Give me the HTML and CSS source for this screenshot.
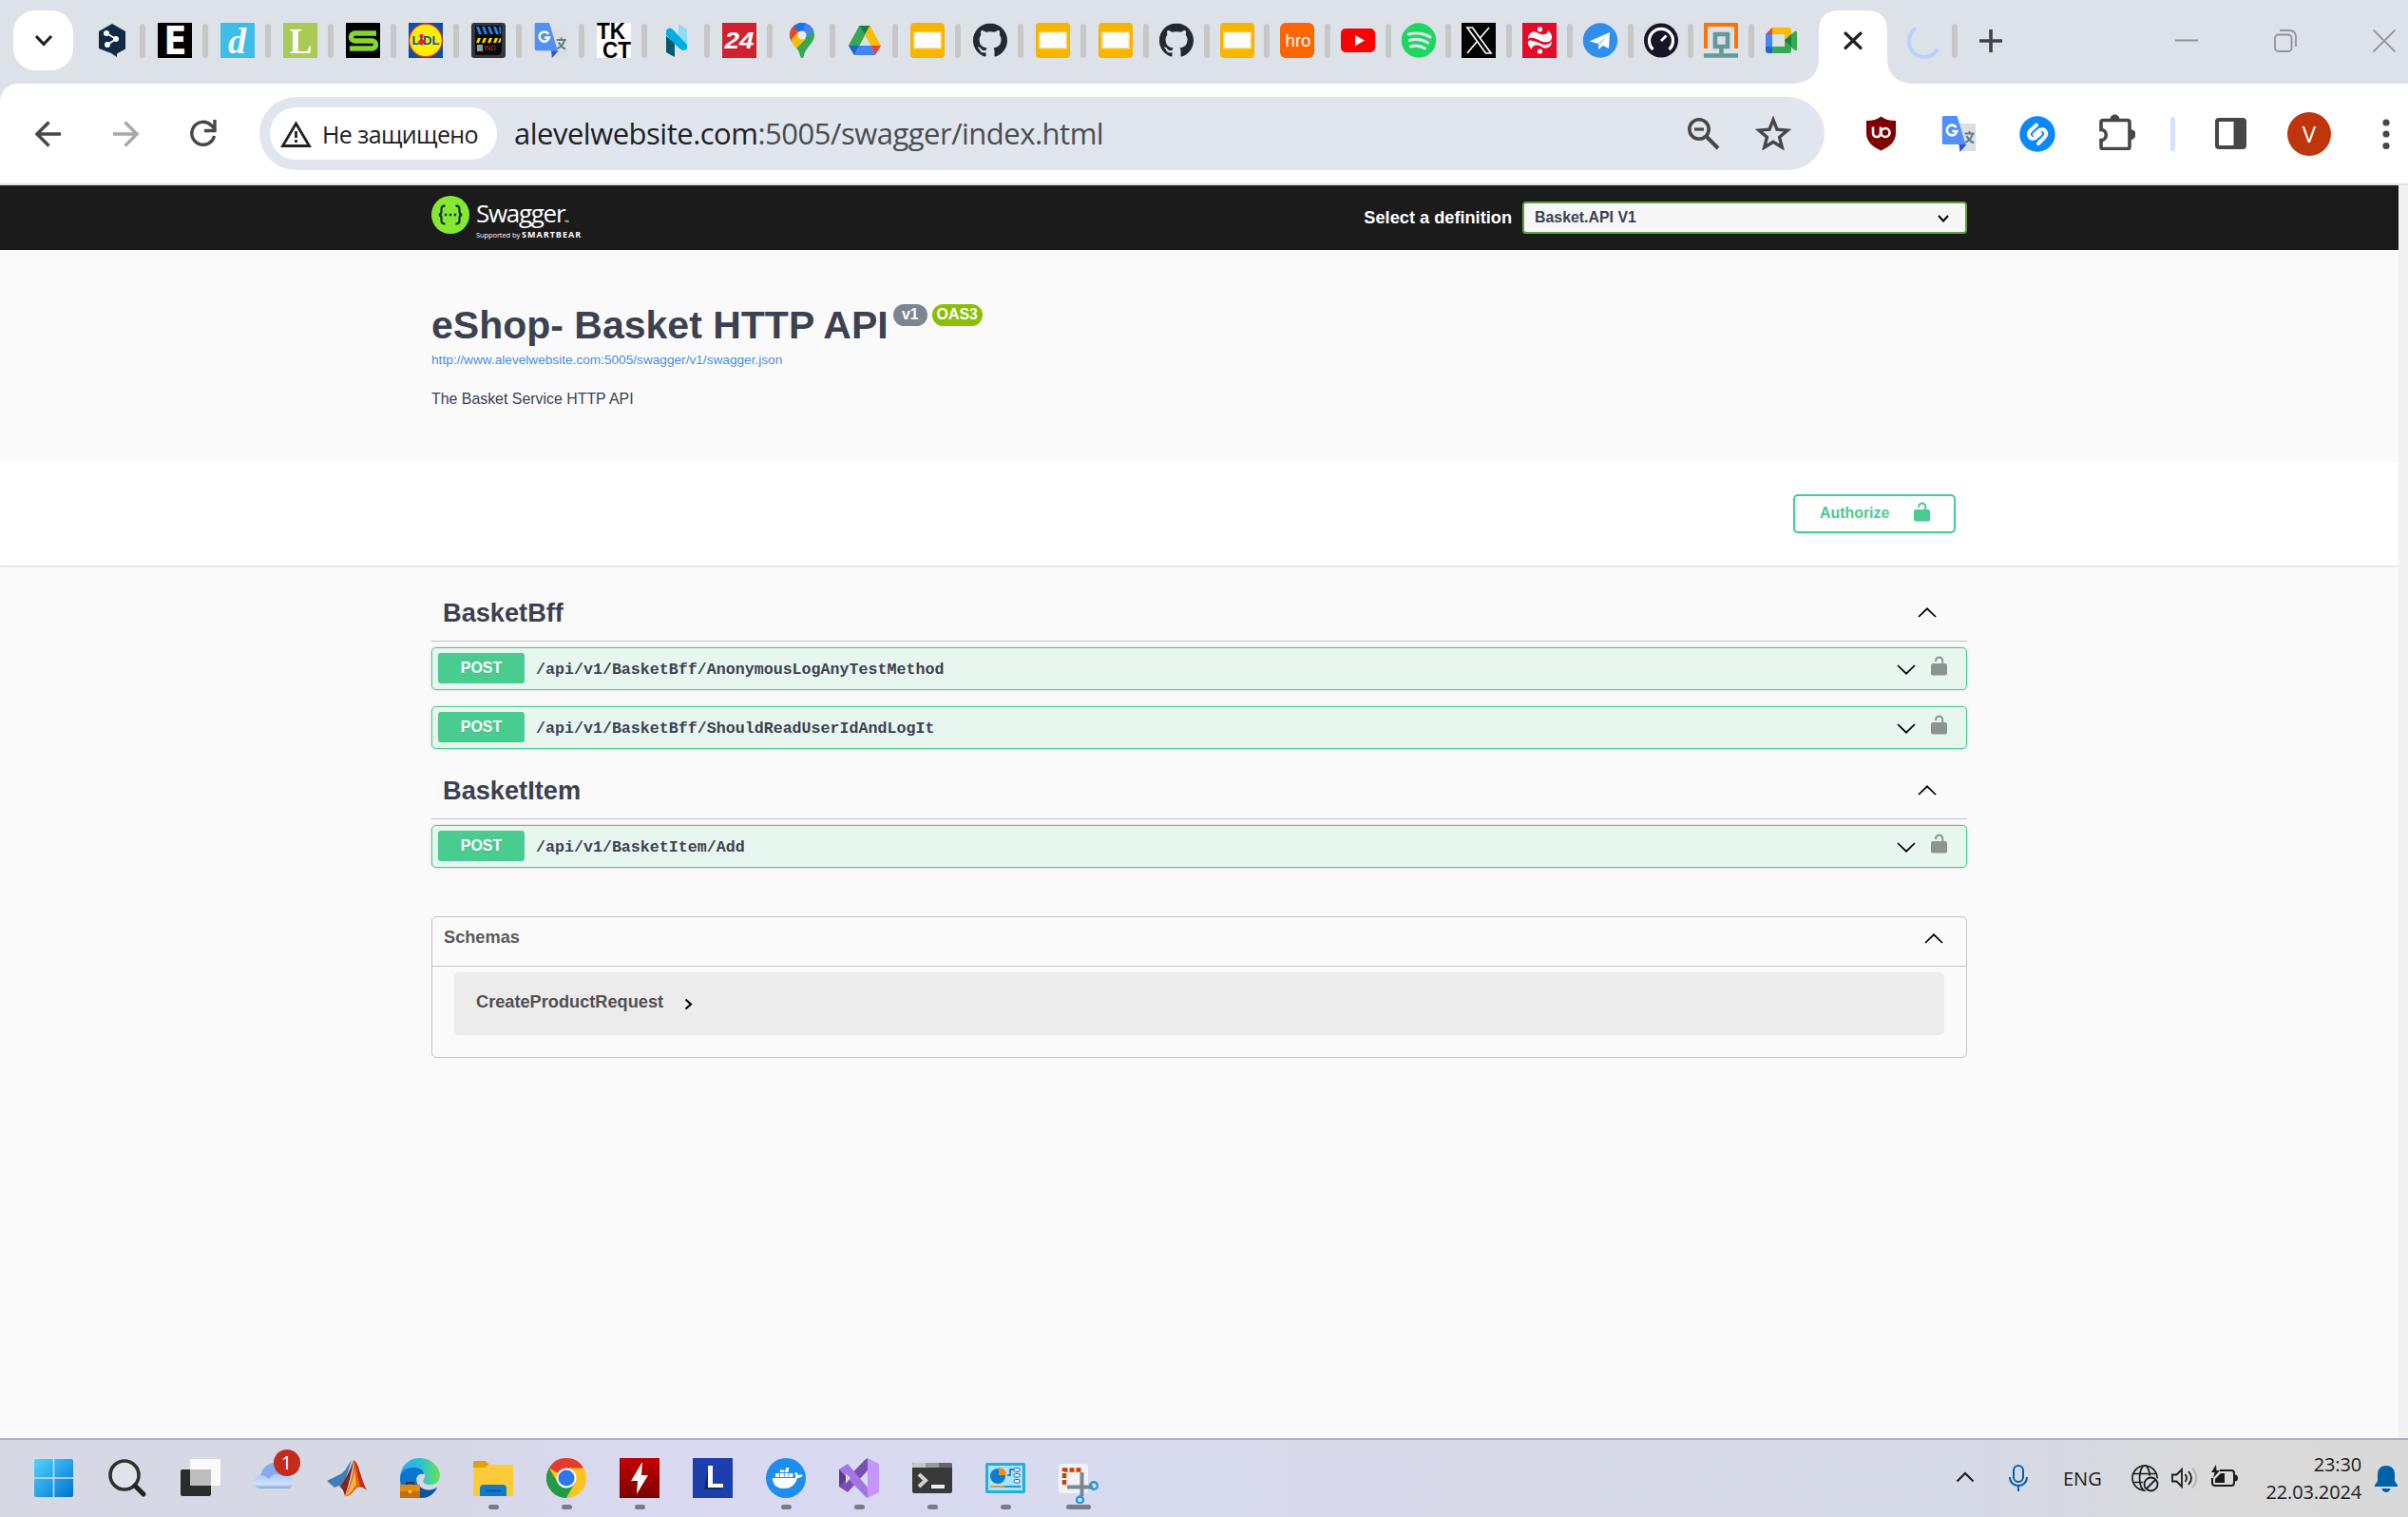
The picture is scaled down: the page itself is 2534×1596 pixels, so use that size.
FILE: index.html
```html
<!DOCTYPE html>
<html lang="ru">
<head>
<meta charset="utf-8">
<title>Swagger UI</title>
<link rel="stylesheet" href="styles.css">
</head>
<body>
<svg class="defs" aria-hidden="true">
  <symbol id="slides" viewBox="0 0 36 37"><rect width="36" height="37" rx="4" fill="#f8b500"/><rect x="3" y="9.500" width="30" height="18" fill="#fbd980"/><rect x="4.500" y="10.500" width="27" height="15.500" fill="#fff"/></symbol>
  <symbol id="github" viewBox="0 0 16 16"><path fill="#24292f" d="M8 0C3.580 0 0 3.580 0 8c0 3.540 2.290 6.530 5.470 7.590.4.070.55-.17.55-.38 0-.19-.01-.82-.01-1.490-2.010.37-2.530-.49-2.690-.94-.09-.23-.48-.94-.82-1.130-.28-.15-.68-.52-.01-.53.63-.01 1.080.58 1.230.82.72 1.210 1.870.87 2.330.66.07-.52.28-.87.51-1.070-1.780-.2-3.640-.89-3.640-3.950 0-.87.31-1.590.82-2.150-.08-.2-.36-1.020.08-2.120 0 0 .67-.21 2.200.82.64-.18 1.320-.27 2-.27s1.360.09 2 .27c1.530-1.040 2.200-.82 2.200-.82.44 1.100.16 1.920.08 2.120.51.56.82 1.270.82 2.150 0 3.070-1.870 3.750-3.650 3.950.29.25.54.73.54 1.480 0 1.070-.01 1.930-.01 2.200 0 .21.15.46.55.38A8.010 8.010 0 0 0 16 8c0-4.420-3.580-8-8-8z"/></symbol>
  <symbol id="translate" viewBox="0 0 36 38"><path d="M17 8h17a2 2 0 0 1 2 2v25a2 2 0 0 1-2 2H20z" fill="#dcdfe2"/><path d="M18 30h8l-7 8z" fill="#3850c8"/><path d="M2 0h14l9 30H2a2 2 0 0 1-2-2V2a2 2 0 0 1 2-2z" fill="#5090f8"/><path d="M24 18.500h10M29 16v2.500M32.500 18.500c-1 4-4 7.500-8 9.500M26 21c2 4 4.500 6 7.500 7.500" fill="none" stroke="#607d8b" stroke-width="2"/><path d="M15 12a5.300 5.300 0 1 0 .8 4h-5" fill="none" stroke="#fff" stroke-width="2.600"/></symbol>
  <symbol id="up" viewBox="0 0 20 11"><path d="M1 10L10 1.300 19 10" fill="none" stroke="#000" stroke-width="1.700"/></symbol>
  <symbol id="down" viewBox="0 0 20 11"><path d="M1 1l9 8.700L19 1" fill="none" stroke="#000" stroke-width="1.700"/></symbol>
  <symbol id="lock" viewBox="0 0 17 21"><path d="M5 6C5 .2 12.300.2 12.300 5.500V9" fill="none" stroke="currentColor" stroke-width="2"/><rect y="8" width="17" height="12.500" rx="2" fill="currentColor"/></symbol>
</svg>

<header class="tabs">
  <button class="tab-search"><svg width="20" height="14" viewBox="0 0 20 14"><path d="M2 2l8 8.500L18 2" fill="none" stroke="#202124" stroke-width="3.200"/></svg></button>
  <div class="tab"><svg viewBox="0 0 36 37"><path d="M18 1l14 8v18.500l-9 5V36l-6-4-13-5V9z" fill="#0f2b46"/><path d="M12 11l10 6-9 6" fill="none" stroke="#fff" stroke-width="1.800"/><circle cx="12" cy="11" r="3" fill="#fff"/><circle cx="22" cy="17" r="3" fill="#fff"/><circle cx="13" cy="23" r="3" fill="#fff"/></svg></div>
  <div class="tab"><svg viewBox="0 0 36 37"><rect width="36" height="37"/><text x="6.500" y="33" font-size="40" textLength="24" lengthAdjust="spacingAndGlyphs" class="fi slab">E</text></svg></div>
  <div class="tab"><svg viewBox="0 0 36 37"><rect width="36" height="37" fill="#3dbeea"/><text x="8" y="32" font-size="38" class="fi serif it">d</text></svg></div>
  <div class="tab"><svg viewBox="0 0 36 37"><rect width="36" height="37" fill="#a9cb56"/><text x="6.500" y="32" font-size="38" textLength="24" lengthAdjust="spacingAndGlyphs" class="fi serif">L</text></svg></div>
  <div class="tab"><svg viewBox="0 0 36 37"><rect width="36" height="37"/><path d="M32 11H9.500a3.500 3.500 0 0 0 0 8h18a3.500 3.500 0 0 1 0 8H4" fill="none" stroke="#83d730" stroke-width="5.500"/></svg></div>
  <div class="tab"><svg viewBox="0 0 36 37"><rect width="36" height="37" fill="#0a4fa8"/><circle cx="18" cy="18.500" r="17.300" fill="#ffee00" stroke="#e3342a" stroke-width="1.200"/><text x="3.500" y="23" font-size="12" textLength="29" lengthAdjust="spacingAndGlyphs" class="fi" fill="#0a4fa8">LiDL</text><circle cx="13.500" cy="14" r="2.200" fill="#e3202a"/><path d="M13.500 16l4 4-4 4-4-4z" fill="#e3202a"/></svg></div>
  <div class="tab"><svg viewBox="0 0 36 37"><rect width="36" height="37" rx="3" fill="#33363b"/><path d="M4 3h28v28l-3 3H4z" fill="#08090b"/><path d="M5 4h3l3 8H8zM11 4h3l3 8h-3zM17 4h3l3 8h-3zM23 4h3l3 8h-3zM29 4h2v8h-1z" fill="#1689f5"/><path d="M7 16h3l-2 5H5zM13 16h3l-2 5h-3zM19 16h3l-2 5h-3zM25 16h3l-2 5h-3zM30 16h1v3l-1 2h-2z" fill="#fdd400"/><path d="M6 23h6v7H6z" fill="#ec8a1c"/><path d="M6 25l3-2 3 3v2H6z" fill="#4ab5f0"/><text x="13" y="29" font-size="7.500" class="fi thin" fill="#b53a30">IND</text></svg></div>
  <div class="tab"><svg viewBox="0 0 36 38"><use href="#translate"/></svg></div>
  <div class="tab"><svg viewBox="0 0 36 37"><rect width="36" height="37" fill="#fff"/><text x="0" y="17" font-size="23" textLength="30" lengthAdjust="spacingAndGlyphs" class="fi" fill="#000">TK</text><text x="6" y="36.500" font-size="23" textLength="30" lengthAdjust="spacingAndGlyphs" class="fi" fill="#000">CT</text></svg></div>
  <div class="tab"><svg viewBox="0 0 36 37"><path d="M20 1l9 6v22l-9-6z" fill="#90dcf2"/><path d="M7 14l9 7v15l-9-5z" fill="#015a70"/><path d="M7 8q4-5 8 0l14 15v4q-4 4-8 0L7 13z" fill="#00aee6"/></svg></div>
  <div class="tab"><svg viewBox="0 0 36 37"><rect width="36" height="37" fill="#d22030"/><text x="2.500" y="27" font-size="23" textLength="31" lengthAdjust="spacingAndGlyphs" class="fi it">24</text></svg></div>
  <div class="tab"><svg viewBox="0 0 36 37"><clipPath id="pin"><path d="M18 0a13 13 0 0 1 13 13c0 9-9.500 12-11.500 23.200-.3 1.100-2.700 1.100-3 0C14.500 25 5 22 5 13A13 13 0 0 1 18 0z"/></clipPath><g clip-path="url(#pin)"><path d="M0 0h36v37H0z" fill="#34a853"/><path d="M8 0h22l-9 10-9 3z" fill="#1a73e8"/><path d="M22 0l9 7-7 7-5-7z" fill="#4285f4"/><path d="M0 0l9 4 7 7L5 21z" fill="#ea4335"/><path d="M5 20l9-11 8 8L9 30z" fill="#fbbc04"/></g><circle cx="18" cy="13" r="4.600" fill="#e8ebf0"/></svg></div>
  <div class="tab"><svg viewBox="0 0 36 37"><path d="M12.500 3h11L7 34 1 24z" fill="#34a853"/><path d="M12.500 3h11L18 12.500z" fill="#188038"/><path d="M12.500 3L18 12.500 12 24H1z" fill="#34a853"/><path d="M23.500 3L18 12.500 24.500 24H35z" fill="#fbbc04"/><path d="M1 24h11l-5 10z" fill="#1967d2"/><path d="M12 24h12.500L29 34H7z" fill="#4285f4"/><path d="M24.500 24H35l-6 10z" fill="#ea4335"/></svg></div>
  <div class="tab"><svg viewBox="0 0 36 37"><use href="#slides"/></svg></div>
  <div class="tab"><svg viewBox="0 0 16 16"><use href="#github"/></svg></div>
  <div class="tab"><svg viewBox="0 0 36 37"><use href="#slides"/></svg></div>
  <div class="tab"><svg viewBox="0 0 36 37"><use href="#slides"/></svg></div>
  <div class="tab slim"><svg viewBox="0 0 16 16"><use href="#github"/></svg></div>
  <div class="tab slim"><svg viewBox="0 0 36 37"><use href="#slides"/></svg></div>
  <div class="tab slim"><svg viewBox="0 0 36 37"><rect width="36" height="37" rx="6" fill="#ff6500"/><text x="5.500" y="25" font-size="18" textLength="27" lengthAdjust="spacingAndGlyphs" class="fi thin">hro</text></svg></div>
  <div class="tab slim"><svg viewBox="0 0 36 37"><rect y="6" width="36" height="25" rx="5" fill="#f00"/><path d="M15 13l10 5.500-10 6z" fill="#fff"/></svg></div>
  <div class="tab slim"><svg viewBox="0 0 36 37"><circle cx="18" cy="18.500" r="18.200" fill="#1ed760"/><path d="M7.500 12q12-3 22.500 3M8.500 18.500q10-3 19 2.500M9.500 25q8-2.500 15 2" fill="none" stroke="#dfe5ea" stroke-width="3.200" stroke-linecap="round"/></svg></div>
  <div class="tab slim"><svg viewBox="0 0 36 37"><rect width="36" height="37"/><path d="M6 5h5.500L31 32h-5.500z" fill="none" stroke="#fff" stroke-width="1.700"/><path d="M29 5L19.500 16M16 20L6 32" stroke="#fff" stroke-width="1.700"/></svg></div>
  <div class="tab slim"><svg viewBox="0 0 36 37"><rect width="36" height="37" fill="#e60a28"/><circle cx="18.500" cy="6.800" r="2.600" fill="#fff"/><circle cx="18.500" cy="30" r="2.600" fill="#fff"/><path d="M6 17C6 9 13 8 17 11c5 3 10 1 10-3 6 5 5 11 0 12-6 1.500-10-3-15-4-3-.5-5 0-6 1z" fill="#fff"/><path d="M31 19c0 8-7 9-11 6-5-3-10-1-10 3-6-5-5-11 0-9 6 0 10 5 15 4 3-.5 5-2 6-4z" fill="#fff"/></svg></div>
  <div class="tab slim"><svg viewBox="0 0 36 37"><circle cx="18" cy="18.500" r="18.200" fill="#2f8fef"/><path d="M6.500 19.500L28 10l-1 17-6-3-5 4v-6z" fill="#fff"/><path d="M16 21l9-7-6 8-2.500 4z" fill="#bcdcfa"/></svg></div>
  <div class="tab slim"><svg viewBox="0 0 36 37"><circle cx="18" cy="18.500" r="18" fill="#141526"/><path d="M9.500 28a12.500 12.500 0 1 1 17 0" fill="none" stroke="#fff" stroke-width="3.200"/><path d="M18 19l5.500-5.500" stroke="#fff" stroke-width="2.800"/></svg></div>
  <div class="tab slim"><svg viewBox="0 0 36 37"><path d="M2 27V2h32v25" fill="none" stroke="#ff7400" stroke-width="4"/><path d="M12 12h13v13H12zM18.500 26v8M0 34.500h36" fill="none" stroke="#62999b" stroke-width="4.600"/></svg></div>
  <div class="tab slim last"><svg viewBox="0 0 36 37"><path d="M1 12l7-7v7z" fill="#ea4335"/><path d="M8 5h17q3 0 3 3v9l-7 3v-8H8z" fill="#fbbc04"/><path d="M1 12h7v13H1z" fill="#4285f4"/><path d="M1 25h7v7H4q-3 0-3-3z" fill="#1967d2"/><path d="M8 25h13v-7l7-6v17q0 3-3 3H8z" fill="#34a853"/><path d="M21 18.500l10-9q3-2 3 1v17q0 3-3 1z" fill="#34a853"/><path d="M21 18.500l7-6.500v13z" fill="#188038"/></svg></div>
  <div class="active-tab"><svg width="126" height="77" viewBox="0 0 126 77"><path d="M0 77c17-1 27-10 27-27V22Q27 0 49 0h28q22 0 22 22v28c0 17 10 26 27 27z" fill="#fff"/><path d="M55 24l16 15.500M71 24L55 39.500" stroke="#202124" stroke-width="3.200" stroke-linecap="round"/></svg></div>
  <div class="loading-tab"><svg width="36" height="36" viewBox="0 0 36 36"><path d="M9.500 5A16 16.500 0 1 0 33 27" fill="none" stroke="#bad2fa" stroke-width="4.200" stroke-linecap="round"/></svg></div>
  <svg class="plus" width="24" height="24" viewBox="0 0 24 24"><path d="M12 0v24M0 12h24" stroke="#404246" stroke-width="3.600"/></svg>
  <div class="win">
    <svg width="24" height="24" viewBox="0 0 24 24"><path d="M0 11.500h24" stroke="#909398" stroke-width="2"/></svg>
    <svg width="24" height="24" viewBox="0 0 24 24"><rect x="1" y="5.500" width="17.500" height="17.500" rx="3.500" fill="none" stroke="#909398" stroke-width="1.800"/><path d="M6 1h10q7 0 7 7v10" fill="none" stroke="#909398" stroke-width="1.800"/></svg>
    <svg width="24" height="24" viewBox="0 0 24 24"><path d="M.5.5l23 23m0-23l-23 23" stroke="#909398" stroke-width="1.800"/></svg>
  </div>
</header>

<nav class="toolbar">
  <svg class="back" width="28" height="28" viewBox="0 0 28 28"><path d="M27 14H2M14.500 1.500L2 14l12.500 12.500" fill="none" stroke="#474747" stroke-width="3.400"/></svg>
  <svg class="fwd" width="28" height="28" viewBox="0 0 28 28"><path d="M1 14h25M13.500 1.500L26 14 13.500 26.500" fill="none" stroke="#a9a9a9" stroke-width="3.400"/></svg>
  <svg class="reload" width="29" height="29" viewBox="0 0 29 29"><path d="M26.500 17A12 12 0 1 1 23 5.500L26.500 9" fill="none" stroke="#474747" stroke-width="3.400"/><path d="M27 0v11.500H16" fill="none" stroke="#474747" stroke-width="3.400"/></svg>
  <div class="omnibox">
    <div class="chip"><svg width="33" height="28" viewBox="0 0 33 28"><path d="M16.500 3L30.500 26.500H2.500z" fill="none" stroke="#202124" stroke-width="2.800"/><path d="M16.500 11v7M16.500 20v3" stroke="#202124" stroke-width="2.800"/></svg><span>Не защищено</span></div>
    <div class="url">alevelwebsite.com<span>:5005/swagger/index.html</span></div>
    <svg class="mag" width="34" height="34" viewBox="0 0 34 34"><circle cx="12" cy="12" r="10.200" fill="none" stroke="#474747" stroke-width="3.600"/><path d="M19 19l13 13" stroke="#474747" stroke-width="4"/><path d="M7 12h10" stroke="#474747" stroke-width="3.200"/></svg>
    <svg class="star" width="38" height="36" viewBox="0 0 38 36"><path d="M19 4l4 10.200 11 .9-8.400 7.200 2.700 10.700L19 27.200 9.700 33l2.700-10.700L4 15.100l11-.9z" fill="none" stroke="#474747" stroke-width="3.400"/></svg>
  </div>
  <div class="exts">
    <svg width="33" height="37" viewBox="0 0 33 37"><path d="M16.500.5Q22 5 32 5v13c0 10-8 15-15.500 18.500C9 33 1 28 1 18V5Q11 5 16.500.5z" fill="#800000"/><path d="M8 11.500v6q0 4.500 4 4.500t4-4.500v-6" fill="none" stroke="#fff" stroke-width="2.600"/><circle cx="21" cy="17.500" r="4.500" fill="none" stroke="#fff" stroke-width="2.600"/></svg>
    <svg width="37" height="38" viewBox="0 0 36 38"><use href="#translate"/></svg>
    <svg width="38" height="38" viewBox="0 0 38 38"><circle cx="19" cy="19" r="18.700" fill="#0a88fe"/><path d="M18 9.500l-6 5.500c-5 5 0 11 5 8l5-4.500" fill="none" stroke="#fff" stroke-width="4" stroke-linecap="round"/><path d="M20 29l6-6c5-5 0-11-5-8l-5 4.500" fill="none" stroke="#fff" stroke-width="4" stroke-linecap="round"/></svg>
    <svg width="38" height="38" viewBox="0 0 38 38"><path d="M4 6.500h26q2 0 2 2v26q0 2-2 2H4q-2 0-2-2v-7c7 0 7-11 0-11v-8q0-2 2-2z" fill="none" stroke="#474747" stroke-width="3.600"/><path d="M11.500 5.500a5 5 0 0 1 10 0zM33 16a5 5 0 0 1 0 11z" fill="#474747"/></svg>
    <i class="bar"></i>
    <svg width="33" height="33" viewBox="0 0 33 33"><rect width="33" height="33" rx="4" fill="#474747"/><rect x="4" y="4" width="15.500" height="25" fill="#fff"/></svg>
    <span class="avatar">V</span>
    <svg width="8" height="34" viewBox="0 0 8 34"><g fill="#474747"><circle cx="4" cy="5" r="3.600"/><circle cx="4" cy="17" r="3.600"/><circle cx="4" cy="29.500" r="3.600"/></g></svg>
  </div>
</nav>

<main class="viewport">
  <div class="page">
    <div class="topbar"><div class="wrap">
      <svg class="logo" width="40" height="40" viewBox="0 0 40 40"><circle cx="20" cy="20" r="20" fill="#85ea2d"/><path d="M14.500 10.500q-4 0-4 3.500v2.500q0 3-2.700 3.500 2.700.5 2.700 3.500V26q0 3.500 4 3.500M25.500 10.500q4 0 4 3.500v2.500q0 3 2.700 3.500-2.700.5-2.700 3.500V26q0 3.500-4 3.500" fill="none" stroke="#173647" stroke-width="2.300"/><g fill="#173647"><circle cx="15" cy="20" r="1.400"/><circle cx="20" cy="20" r="1.400"/><circle cx="25" cy="20" r="1.400"/></g></svg>
      <div class="brand"><div class="name"><span>Swagger</span><small>™</small></div><div class="sup"><span>Supported by</span> <b>SMARTBEAR</b></div></div>
      <label>Select a definition</label>
      <div class="select"><span>Basket.API V1</span><svg width="12" height="8" viewBox="0 0 12 8"><path d="M1 1l5 5.500L11 1" fill="none" stroke="#000" stroke-width="2"/></svg></div>
    </div></div>
    <section class="info wrap">
      <div class="title"><h1>eShop- Basket HTTP API</h1><span class="ver">v1</span><span class="ver oas">OAS3</span></div>
      <a>http://www.alevelwebsite.com:5005/swagger/v1/swagger.json</a>
      <p>The Basket Service HTTP API</p>
    </section>
    <section class="scheme"><div class="wrap"><button class="auth"><span>Authorize</span><svg width="17" height="21"><use href="#lock"/></svg></button></div></section>
    <section class="ops wrap">
      <div class="tag"><h3>BasketBff</h3><svg width="20" height="11"><use href="#up"/></svg></div>
      <div class="op"><b>POST</b><code>/api/v1/BasketBff/AnonymousLogAnyTestMethod</code><svg width="20" height="11"><use href="#down"/></svg><svg class="lock" width="17" height="21"><use href="#lock"/></svg></div>
      <div class="op"><b>POST</b><code>/api/v1/BasketBff/ShouldReadUserIdAndLogIt</code><svg width="20" height="11"><use href="#down"/></svg><svg class="lock" width="17" height="21"><use href="#lock"/></svg></div>
      <div class="tag second"><h3>BasketItem</h3><svg width="20" height="11"><use href="#up"/></svg></div>
      <div class="op"><b>POST</b><code>/api/v1/BasketItem/Add</code><svg width="20" height="11"><use href="#down"/></svg><svg class="lock" width="17" height="21"><use href="#lock"/></svg></div>
    </section>
    <section class="schemas wrap">
      <div class="shead"><h4>Schemas</h4><svg width="20" height="11"><use href="#up"/></svg></div>
      <div class="model"><span>CreateProductRequest</span><svg width="9" height="13" viewBox="0 0 9 13"><path d="M1.500 1.500l5.500 5-5.500 5" fill="none" stroke="#000" stroke-width="2.200"/></svg></div>
    </section>
  </div>
  <div class="scroll"></div>
</main>

<footer class="taskbar">
  <div class="app"><svg viewBox="0 0 42 42"><defs><linearGradient id="wg" x2="1" y2="1"><stop stop-color="#4fd5ff"/><stop offset="1" stop-color="#0072cf"/></linearGradient></defs><rect y="1" width="41" height="40" rx="2" fill="url(#wg)"/><path d="M20.500 1v40M0 21h41" stroke="#d6dae6" stroke-width="1.500"/></svg></div>
  <div class="app"><svg viewBox="0 0 42 42"><circle cx="18" cy="18" r="15" fill="#e2e3ea" stroke="#303030" stroke-width="3.600"/><path d="M29 29l9 9" stroke="#222" stroke-width="5" stroke-linecap="round"/></svg></div>
  <div class="app"><svg viewBox="0 0 42 42"><rect y="12" width="32" height="28" rx="2" fill="#2b2b2b"/><rect x="10" y="1" width="32" height="28" rx="1.500" fill="#fafafa"/><rect x="10" y="12" width="22" height="17" fill="#bdbdbd"/></svg></div>
  <div class="app"><svg viewBox="0 0 42 42"><defs><linearGradient id="cg" x2="0" y2="1"><stop stop-color="#a9c8f6"/><stop offset=".7" stop-color="#cfe2fa"/><stop offset="1" stop-color="#7fa6e6"/></linearGradient></defs><path d="M9 28C4 22 8 16 8 16 10 9 16 5 22 5c8 0 13 5 13 13v10z" fill="#86aaec"/><path d="M8 32q-8 0-8-7 0-6 7-7c5 0 7 3 9 4 4-7 11-6 15-3 7-2 11 1 11 6 0 4-2 7-7 7z" fill="url(#cg)"/></svg><em>1</em></div>
  <div class="app"><svg viewBox="0 0 42 42"><path d="M0 24l12-6q6-2 10-10l4-6-9 29-4-2-5 2z" fill="#3f7fb5"/><path d="M14 30Q22 20 28 2q-2 16-9 38-2-9-6-10z" fill="#8b2015"/><path d="M28 2c5 0 7 20 14 32q-8-7-13 0-5 7-10 6Q29 18 28 2z" fill="#e3661c"/><path d="M28 4c3 10-2 26-9 36 8-3 9-10 12-12z" fill="#f6b73c"/><path d="M29 3c5 4 7 20 13 31q-4-4-7-4z" fill="#c52b16"/></svg></div>
  <div class="app"><svg viewBox="0 0 42 42"><defs><linearGradient id="eg"><stop stop-color="#29a8ef"/><stop offset=".5" stop-color="#27c2d6"/><stop offset="1" stop-color="#6be24f"/></linearGradient></defs><path d="M0 20C1 7 10 0 21 0s21 9 21 18c0 8-6 10-11 10s-8-3-6-6c3-4 0-8-6-8S4 17 0 25z" fill="url(#eg)"/><path d="M0 23C0 13 7 10 14 10s11 3 11 7c-7-2-10 5-6 11s11 8 20 3c-4 8-10 11-18 11C8 42 0 34 0 23z" fill="#0b74d1"/><path d="M19 28c5 7 14 7 20 3-4 8-10 11-18 11z" fill="#0b559f"/><rect y="28" width="21" height="14" fill="#c46f08"/><path d="M0 28h21v7H0z" fill="#e58a0b"/><path d="M7 28v-2h7v2" stroke="#432" stroke-width="2" fill="none"/><rect x="9" y="34" width="3" height="3" fill="#ffd23c"/></svg></div>
  <div class="app run"><svg viewBox="0 0 42 42"><path d="M0 5q0-2 2-2h11l4 4h23q2 0 2 2v29q0 2-2 2H2q-2 0-2-2z" fill="#e0a008"/><path d="M0 10h12l4-3h24q2 0 2 2v29q0 2-2 2H2q-2 0-2-2z" fill="#fdcb38"/><path d="M7 40V32q0-4 4-4h20q4 0 4 4v8z" fill="#0f7cc9"/><path d="M13 34.500h16" stroke="#0a569b" stroke-width="2"/></svg></div>
  <div class="app run"><svg viewBox="0 0 42 42"><circle cx="21" cy="21" r="21" fill="#fcc321"/><path d="M21 21L2.800 10.500A21 21 0 0 1 39.200 10.500L21 10.500z" fill="#e53b2e"/><path d="M2.800 10.500A21 21 0 0 0 21 42L30 26 21 21 12 26z" fill="#229a46"/><circle cx="21" cy="21" r="10.500" fill="#fff"/><circle cx="21" cy="21" r="8.500" fill="#2a78ee"/></svg></div>
  <div class="app run"><svg viewBox="0 0 42 42"><defs><linearGradient id="rg" x2="0" y2="1"><stop stop-color="#c40000"/><stop offset="1" stop-color="#7c0000"/></linearGradient></defs><rect width="42" height="42" fill="url(#rg)"/><path d="M24 4L12 24h7l-1 14 12-20h-7z" fill="#fff"/></svg></div>
  <div class="app"><svg viewBox="0 0 42 42"><rect width="42" height="42" fill="#1d3fae"/><path d="M16 12l-4 21h16l3-2H16z" fill="#04305e"/><path d="M16 8h5v19h11v4H16z" fill="#fff"/></svg></div>
  <div class="app run"><svg viewBox="0 0 42 42"><circle cx="21" cy="21" r="21" fill="#1d8ef0"/><path d="M7 21h24q1-3-1-5l2-1q2 1 2 3 3-1 5 0-2 3-6 3c-2 8-8 11-14 11C11 32 7 28 7 21z" fill="#fff"/><path d="M10 16h4v4h-4zM14.800 16h4v4h-4zM19.600 16h4v4h-4zM24.400 16h4v4h-4zM14.800 12.500h4V15h-4zM19.600 12.500h4V15h-4zM21 10h3v3h-3z" fill="#fff"/></svg></div>
  <div class="app run"><svg viewBox="0 0 42 42"><path d="M30 0l12 6v30l-12 6z" fill="#c695fb"/><path d="M0 12l7-4v26l-7-4z" fill="#5f3a94"/><path d="M0 30L27 2l3-2v13L9 36z" fill="#7850b4"/><path d="M0 12l9-6 21 25v11L27 40z" fill="#a574e4"/><path d="M7 16l5 5-5 6z" fill="#d9d9ef"/></svg></div>
  <div class="app run"><svg viewBox="0 0 42 42"><rect y="5" width="42" height="32" rx="2" fill="#383838"/><path d="M0 10V7q0-2 2-2h12v5z" fill="#c6c6c6"/><path d="M14 5h14v5H14z" fill="#999"/><path d="M28 5h12q2 0 2 2v3H28z" fill="#666"/><path d="M7 17l7 6.500L7 30" fill="none" stroke="#d0d0d0" stroke-width="4"/><rect x="20" y="28" width="14" height="4" fill="#eee"/></svg></div>
  <div class="app run"><svg viewBox="0 0 42 42"><rect y="5" width="42" height="32" rx="2" fill="#22aee4"/><rect x="3" y="8" width="36" height="26" fill="#a9e4f8"/><circle cx="13" cy="19" r="8" fill="#0f7cd0"/><path d="M14 18v-8a8 8 0 0 1 8 8z" fill="#f58b0c"/><path d="M23 18h3v-6h5M31 18h4M31 24h4" fill="none" stroke="#0b5fae" stroke-width="1.500"/><g fill="#fff" stroke="#0b5fae"><rect x="30" y="10.500" width="6" height="3.500" rx="1.500"/><rect x="30" y="16.500" width="6" height="3.500" rx="1.500"/><rect x="30" y="22.500" width="6" height="3.500" rx="1.500"/></g><path d="M5 30h15" stroke="#e09a3c" stroke-width="2"/><path d="M20 30h17" stroke="#2a90d8" stroke-width="2"/></svg></div>
  <div class="app run on"><svg viewBox="0 0 42 48"><rect y="6" width="31" height="31" rx="3" fill="#f1f3f5"/><path d="M6 28V12.500h18" fill="none" stroke="#d83b01" stroke-width="4.500" stroke-dasharray="5 2"/><path d="M24.500 15v25M9 30.500h27" stroke="#7d8791" stroke-width="4"/><circle cx="37" cy="29" r="3.800" fill="none" stroke="#1b9be0" stroke-width="2.400"/><circle cx="22.500" cy="44" r="3.500" fill="none" stroke="#1b9be0" stroke-width="2.400"/></svg></div>
  <div class="tray">
    <svg class="c" width="20" height="12" viewBox="0 0 20 12"><path d="M1.500 10.500L10 2l8.500 8.500" fill="none" stroke="#1b1b1b" stroke-width="2"/></svg>
    <svg class="m" width="20" height="28" viewBox="0 0 20 28"><rect x="5" y="1" width="10" height="17" rx="5" fill="none" stroke="#0061a8" stroke-width="2"/><path d="M1 13c0 12 18 12 18 0M10 22v6" fill="none" stroke="#0061a8" stroke-width="2"/></svg>
    <span class="eng">ENG</span>
    <svg class="g" width="29" height="29" viewBox="0 0 29 29"><g fill="none" stroke="#1b1b1b" stroke-width="1.700"><circle cx="14" cy="14" r="13"/><ellipse cx="14" cy="14" rx="5.500" ry="13"/><path d="M2.500 9.500h23M2.500 18.500h12"/></g><circle cx="20.500" cy="20.500" r="9" fill="#d7d8e2"/><circle cx="20.500" cy="20.500" r="7" fill="none" stroke="#1b1b1b" stroke-width="1.800"/><path d="M16 25l9-9" stroke="#1b1b1b" stroke-width="1.800"/></svg>
    <svg class="s" width="28" height="24" viewBox="0 0 28 24"><path d="M1 8.500h4.500L11 3v18l-5.500-5.500H1z" fill="none" stroke="#1b1b1b" stroke-width="1.800"/><path d="M14.500 8q3 4 0 8M18 5q6 7 0 14" fill="none" stroke="#1b1b1b" stroke-width="1.800"/><path d="M22 1.500q8.500 10.500 0 21" fill="none" stroke="#b2b2b8" stroke-width="1.800"/></svg>
    <svg class="b" width="28" height="24" viewBox="0 0 28 24"><path d="M9 6h12q3 0 3 3v10q0 3-3 3H4q-3 0-3-3v-5" fill="none" stroke="#1b1b1b" stroke-width="2"/><path d="M25 10.500q3 0 3 3.500t-3 3.500z" fill="#1b1b1b"/><path d="M4 19v-4l6-6h4v10z" fill="#1b1b1b"/><path d="M5 0L0 8h3.500L2 14l7-8H5.500z" fill="#1b1b1b"/></svg>
    <div class="clock"><div>23:30</div><div>22.03.2024</div></div>
    <svg class="n" width="24" height="28" viewBox="0 0 24 28"><path d="M12 0c6 0 9 4 9 9v7l3 4.500V22H0v-1.500L3 16V9c0-5 3-9 9-9zM7.500 24h9q-1 4-4.500 4t-4.500-4z" fill="#0061a8"/></svg>
  </div>
</footer>
</body>
</html>
```

FILE: styles.css
```css
* { box-sizing: border-box; }
body { margin: 0; width: 2534px; height: 1596px; overflow: hidden; display: flex; flex-direction: column; background: #fafafa; font-family: "Liberation Sans", Arial, sans-serif; color: #3b4151; }
h1, h3, h4, p { margin: 0; }
button { font: inherit; padding: 0; border: 0; }
svg { display: block; flex: none; }
.defs { position: absolute; width: 0; height: 0; }

/* tab strip */
.tabs { height: 88px; background: #dde1e8; display: flex; align-items: flex-start; flex: none; }
.tab-search { width: 63px; height: 63px; margin: 11px 10px 0 14px; border-radius: 23px; background: #fff; display: flex; align-items: center; justify-content: center; }
.tab { width: 66px; height: 37px; margin-top: 24px; padding-left: 13px; display: flex; justify-content: space-between; flex: none; }
.tab svg { width: 36px; height: 37px; overflow: visible; }
.tab::after, .loading-tab::after { content: ""; width: 6px; height: 36px; margin-top: 1px; border-radius: 3px; background: #c7c7c7; }
.tab.slim { width: 63.7px; padding-left: 11px; }
.tab.last { width: 41px; }
.tab.last::after { display: none; }
.fi { font-family: "Liberation Sans", sans-serif; font-weight: bold; fill: #fff; }
.fi[fill="#000"] { fill: #000; }
.fi[fill="#0a4fa8"] { fill: #0a4fa8; }
.fi[fill="#b53a30"] { fill: #b53a30; }
.slab { font-family: "DejaVu Sans", sans-serif; }
.serif { font-family: "Liberation Serif", serif; }
.it { font-style: italic; }
.thin { font-weight: 500; }
.active-tab { margin-top: 11px; width: 126px; flex: none; }
.loading-tab { margin: 24px 0 0 -8px; width: 55px; display: flex; justify-content: space-between; flex: none; }
.loading-tab svg { margin-top: 2px; }
.plus { margin: 31px 0 0 23px; }
.win { display: flex; gap: 80px; margin: 31px 13px 0 auto; }

/* toolbar */
.toolbar { height: 107px; background: #fff; border-bottom: 2px solid #e0e0e0; display: flex; align-items: flex-start; position: relative; flex: none; }
.toolbar::before { content: ""; position: absolute; left: 0; top: 0; width: 18px; height: 18px; background: radial-gradient(circle at 100% 100%, transparent 17.500px, #dde1e8 18px); }
.back { margin: 39px 0 0 37px; }
.fwd { margin: 39px 0 0 53px; }
.reload { margin: 38px 0 0 53px; }
.omnibox { width: 1647px; height: 77px; margin: 14px 0 0 45px; border-radius: 39px; background: #e1e5ee; display: flex; align-items: flex-start; font-family: "Open Sans", "Noto Sans", sans-serif; flex: none; }
.chip { width: 239px; height: 55px; margin: 11px 0 0 11px; padding-left: 11px; border-radius: 28px; background: #fff; display: flex; align-items: center; gap: 11px; font-size: 25px; letter-spacing: -.6px; color: #202124; white-space: nowrap; }
.url { margin: 11px 0 0 18px; line-height: 55px; font-size: 31px; letter-spacing: -.5px; color: #202124; white-space: nowrap; }
.url span { color: #4a4c50; }
.mag { margin: 22px 37px 0 auto; }
.star { margin: 20px 35px 0 0; }
.exts { height: 77px; margin: 14px 0 0 43px; display: flex; align-items: center; }
.exts > :nth-child(2) { margin-left: 47px; }
.exts > :nth-child(3) { margin-left: 45px; }
.exts > :nth-child(4) { margin: 0 0 4px 46px; }
.bar { width: 5px; height: 36px; margin-left: 37px; border-radius: 2.500px; background: #d3e3fd; }
.exts > :nth-child(6) { margin-left: 42px; }
.avatar { width: 46px; height: 46px; margin-left: 43px; border-radius: 50%; background: #bf360c; color: #fff; font: 24px/46px "Open Sans", sans-serif; text-align: center; }
.exts > :nth-child(8) { margin-left: 54px; }

/* swagger page */
.viewport { height: 1318px; display: flex; flex: none; }
.page { width: 2524px; }
.scroll { width: 10px; background: #f1f1f1; }
.wrap { width: 1616px; margin-left: auto; margin-right: auto; }
.topbar { height: 68px; background: #1b1b1b; }
.topbar .wrap { height: 68px; display: flex; align-items: flex-start; color: #fff; }
.logo { margin-top: 11px; }
.brand { margin: 13px 0 0 7px; width: 200px; font-family: "Open Sans", sans-serif; }
.name { height: 38px; line-height: 32px; font-size: 26px; letter-spacing: -1.300px; display: flex; }
.name small { font-size: 6px; line-height: 52px; letter-spacing: 0; }
.sup { margin-top: -5px; line-height: 12px; font-size: 7.500px; letter-spacing: -.1px; display: flex; gap: 2px; white-space: nowrap; }
.sup b { font-size: 9px; letter-spacing: 1px; }
.topbar label { margin-left: auto; line-height: 68px; font-size: 18.200px; font-weight: bold; }
.select { width: 468px; height: 34px; margin: 17px 0 0 11px; padding: 0 17px 0 11px; border: 2px solid #62a03f; border-radius: 4px; background: #f7f7f7; display: flex; justify-content: space-between; align-items: center; color: #3b4151; font-size: 15.900px; line-height: 28px; font-weight: bold; }
.select span { margin-bottom: 1px; }
.select svg { margin-top: 2px; }
.info { height: 223px; padding-top: 59px; }
.title { display: flex; height: 41px; align-items: flex-start; }
.title h1 { font-size: 41px; line-height: 41px; white-space: nowrap; }
.ver { margin: -2px 0 0 5px; height: 23px; width: 36px; text-align: center; border-radius: 12px; background: #7d8492; color: #fff; font-size: 15.900px; line-height: 22px; font-weight: bold; }
.ver.oas { width: 53px; margin-left: 5px; background: #89bf04; }
.info a { display: table; margin-top: 6px; font-size: 13.650px; line-height: 20px; color: #4990e2; }
.info p { margin-top: 21px; font-size: 15.900px; line-height: 20px; }
.scheme { height: 109px; padding-top: 34px; background: #fff; box-shadow: 0 1px 2px rgba(0, 0, 0, .15); }
.auth { width: 171px; height: 41px; margin: 0 12px 0 auto; padding: 0 25px 0 26px; border: 2px solid #49cc90; border-radius: 5px; background: transparent; box-shadow: 0 1px 2px rgba(0, 0, 0, .1); display: flex; justify-content: space-between; color: #49cc90; font-size: 15.900px; line-height: 36px; font-weight: bold; }
.auth svg { margin-top: 6px; }
.ops { padding-top: 30px; }
.tag { height: 50px; margin-bottom: 6px; padding: 0 32px 0 12px; border-bottom: 1px solid #c3c4c8; display: flex; justify-content: space-between; }
.tag h3 { font-size: 27.200px; line-height: 40px; }
.tag svg { margin-top: 14px; }
.tag.second { margin-top: 24px; }
.op { height: 45px; padding: 5px 20px 0 6px; border: 1px solid #49cc90; border-radius: 5px; background: #e8f6f0; box-shadow: 0 0 3px rgba(0, 0, 0, .19); display: flex; align-items: flex-start; }
.op + .op { margin-top: 17px; }
.op b { width: 91px; height: 32px; border-radius: 3px; background: #49cc90; color: #fff; text-align: center; font-size: 15.900px; line-height: 32px; text-shadow: 0 1px 0 rgba(0, 0, 0, .1); }
.op code { margin-left: 12px; font: bold 16.650px/35px "Liberation Mono", monospace; }
.op svg { margin: 12px 0 0 auto; }
.op svg.lock { margin: 3px 0 0 16px; color: #8b9490; }
.schemas { height: 149px; margin-top: 51px; border: 1px solid #c3c4c8; border-radius: 5px; }
.shead { height: 52px; padding: 0 24px 0 12px; border-bottom: 1px solid #c3c4c8; display: flex; justify-content: space-between; color: #5a5a5a; }
.shead h4 { font-size: 18.200px; line-height: 42px; }
.shead svg { margin-top: 17px; }
.model { height: 66px; margin: 6px 23px 0; padding-left: 23px; border-radius: 5px; background: #ececec; display: flex; color: #505050; font-size: 18.200px; line-height: 63px; font-weight: bold; }
.model svg { margin: 27px 0 0 22px; }

/* taskbar */
.taskbar { height: 83px; border-top: 2px solid #adaeb8; background: linear-gradient(90deg, #d6d8e4 0, #d6d8e6 18%, #d9d9f1 27%, #d8daf0 42%, #d7d9e9 60%, #d6d9e6 82%, #dadada 92%, #d9d9d9 100%); display: flex; padding-left: 18.500px; flex: none; }
.app { width: 77px; position: relative; display: flex; flex-direction: column; align-items: center; flex: none; }
.app svg { width: 42px; height: 42px; margin-top: 19px; }
.app.on svg { height: 48px; margin-bottom: -6px; }
.app.run::after { content: ""; width: 11px; height: 5px; margin-top: 7px; border-radius: 3px; background: #7a7a88; }
.app.on::after { width: 26px; }
.app em { position: absolute; left: 38px; top: 10px; width: 28px; height: 28px; border-radius: 50%; background: #c42b1c; color: #fff; font: 20px/28px "Open Sans", sans-serif; text-align: center; }
.tray { margin-left: auto; display: flex; align-items: flex-start; font-family: "Open Sans", sans-serif; color: #1b1b1b; }
.c { margin: 33px 0 0 0; }
.m { margin: 26px 0 0 36px; }
.eng { margin: 27px 0 0 37px; width: 41px; font-size: 20px; line-height: 28px; }
.g { margin: 26px 0 0 31px; }
.s { margin: 28px 0 0 13px; }
.b { margin: 26px 0 0 14px; }
.clock { width: 130px; margin: 11px 0 0 0; display: flex; flex-direction: column; align-items: flex-end; font-size: 20px; line-height: 29px; letter-spacing: -.15px; }
.n { margin: 27px 11px 0 14px; }
```
